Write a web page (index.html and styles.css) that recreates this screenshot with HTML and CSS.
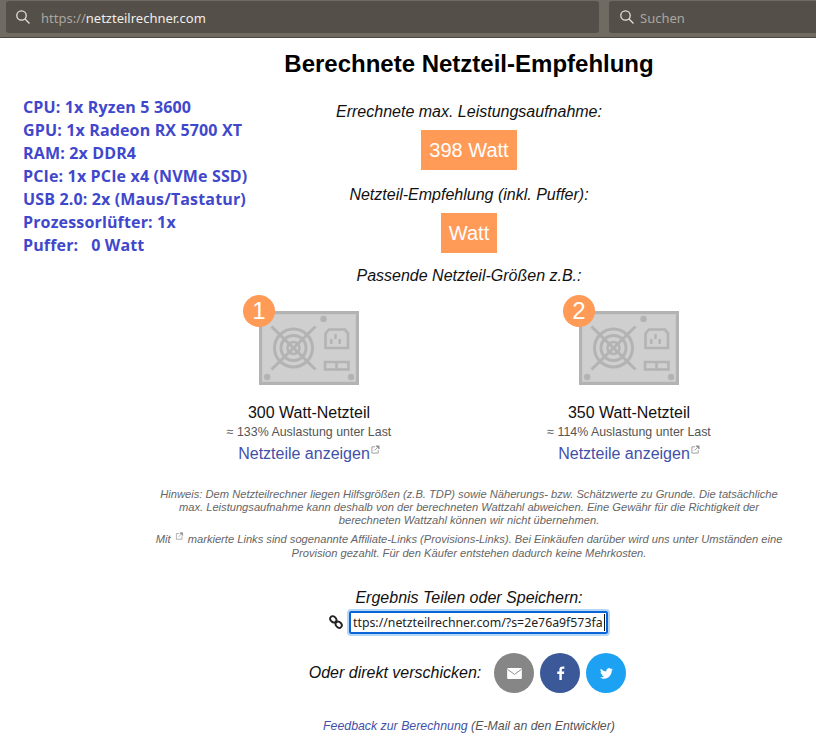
FILE: index.html
```html
<!DOCTYPE html>
<html lang="de">
<head>
<meta charset="utf-8">
<title>Netzteilrechner</title>
<link rel="stylesheet" href="styles.css">
</head>
<body>
<header class="toolbar">
  <div class="field url">
    <svg class="search" viewBox="0 0 16 16"><circle cx="6.5" cy="6.5" r="4.7"/><path d="M10 10l4.5 4.5"/></svg>
    <span class="proto">https://</span><span class="host">netzteilrechner.com</span>
  </div>
  <div class="field find">
    <svg class="search" viewBox="0 0 16 16"><circle cx="6.5" cy="6.5" r="4.7"/><path d="M10 10l4.5 4.5"/></svg>
    <span class="proto">Suchen</span>
  </div>
</header>
<div class="page">
  <aside class="specs">
    <div>CPU: 1x Ryzen 5 3600</div>
    <div>GPU: 1x Radeon RX 5700 XT</div>
    <div>RAM: 2x DDR4</div>
    <div>PCIe: 1x PCIe x4 (NVMe SSD)</div>
    <div>USB 2.0: 2x (Maus/Tastatur)</div>
    <div>Prozessorlüfter: 1x</div>
    <div>Puffer: &nbsp; 0 Watt</div>
  </aside>
  <main class="main">
    <h1 class="title">Berechnete Netzteil-Empfehlung</h1>
    <p class="label first">Errechnete max. Leistungsaufnahme:</p>
    <div class="badge">398 Watt</div>
    <p class="label second">Netzteil-Empfehlung (inkl. Puffer):</p>
    <div class="badge">Watt</div>
    <p class="label third">Passende Netzteil-Größen z.B.:</p>
    <div class="psus">
      <section class="psu">
        <div class="psu-pic">
          <svg class="psu-icon" viewBox="0 0 100 74"><use href="#psu"/></svg>
          <span class="num">1</span>
        </div>
        <div class="psu-name">300 Watt-Netzteil</div>
        <div class="psu-load">≈ 133% Auslastung unter Last</div>
        <a class="psu-link" href="#">Netzteile anzeigen<svg class="ext" viewBox="0 0 10 10"><use href="#ext"/></svg></a>
      </section>
      <section class="psu">
        <div class="psu-pic">
          <svg class="psu-icon" viewBox="0 0 100 74"><use href="#psu"/></svg>
          <span class="num">2</span>
        </div>
        <div class="psu-name">350 Watt-Netzteil</div>
        <div class="psu-load">≈ 114% Auslastung unter Last</div>
        <a class="psu-link" href="#">Netzteile anzeigen<svg class="ext" viewBox="0 0 10 10"><use href="#ext"/></svg></a>
      </section>
    </div>
    <p class="note note-a">Hinweis: Dem Netzteilrechner liegen Hilfsgrößen (z.B. TDP) sowie Näherungs- bzw. Schätzwerte zu Grunde. Die tatsächliche max. Leistungsaufnahme kann deshalb von der berechneten Wattzahl abweichen. Eine Gewähr für die Richtigkeit der berechneten Wattzahl können wir nicht übernehmen.</p>
    <p class="note note-b">Mit <svg class="ext ext-note" viewBox="0 0 10 10"><use href="#ext"/></svg> markierte Links sind sogenannte Affiliate-Links (Provisions-Links). Bei Einkäufen darüber wird uns unter Umständen eine Provision gezahlt. Für den Käufer entstehen dadurch keine Mehrkosten.</p>
    <p class="label share">Ergebnis Teilen oder Speichern:</p>
    <div class="share-row">
      <svg class="chain" viewBox="0 0 14 14"><ellipse cx="4.300" cy="4.300" rx="3.400" ry="2.700" transform="rotate(45 4.300 4.300)"/><ellipse cx="9.700" cy="9.700" rx="3.400" ry="2.700" transform="rotate(45 9.700 9.700)"/></svg>
      <div class="url-box"><span class="url-text">ttps://netzteilrechner.com/?s=2e76a9f573fa</span></div>
    </div>
    <div class="send-row">
      <span class="send-label">Oder direkt verschicken:</span>
      <a class="round mail" href="#"><svg viewBox="0 0 16 12"><rect width="16" height="12" rx="1.2" fill="#fff"/><path d="M0.5 1.5L8 7l7.5-5.5" fill="none" stroke="#868686" stroke-width="1"/></svg></a>
      <a class="round fb" href="#"><svg viewBox="0 0 10 16"><path d="M6.5 16V9h2.4l.4-2.8H6.5V4.5c0-.8.3-1.3 1.4-1.3h1.5V.7C9.100.6 8.300.5 7.300.5 5.200.5 3.700 1.800 3.700 4.200v2H1.300V9h2.400v7z" fill="#fff"/></svg></a>
      <a class="round tw" href="#"><svg viewBox="0 0 24 20"><path d="M24 2.400a9.800 9.800 0 0 1-2.800.8A4.900 4.900 0 0 0 23.300.500a9.800 9.800 0 0 1-3.100 1.200 4.900 4.900 0 0 0-8.400 4.500A14 14 0 0 1 1.700 1 4.900 4.900 0 0 0 3.200 7.600a4.900 4.900 0 0 1-2.200-.6 4.900 4.900 0 0 0 3.900 4.900 4.900 4.900 0 0 1-2.200.1 4.900 4.900 0 0 0 4.600 3.400A9.900 9.900 0 0 1 0 17.400 14 14 0 0 0 7.500 19.600c9.100 0 14.300-7.700 14-14.600A10 10 0 0 0 24 2.400z" fill="#fff"/></svg></a>
    </div>
    <p class="feedback"><a href="#">Feedback zur Berechnung</a> (E-Mail an den Entwickler)</p>
  </main>
</div>
<svg class="defs" width="0" height="0" aria-hidden="true">
  <symbol id="psu" viewBox="0 0 100 74">
    <rect x="1.600" y="1.600" width="96.800" height="70.800" fill="#cfcfcf" stroke="#b3b3b3" stroke-width="3.200"/>
    <g fill="none" stroke="#b3b3b3">
      <circle cx="34.500" cy="37" r="19" stroke-width="3"/>
      <circle cx="34.500" cy="37" r="12.500" stroke-width="3"/>
      <circle cx="34.500" cy="37" r="6" stroke-width="2.500"/>
      <path d="M12.500 15.500l44 43M56.500 15.500l-44 43" stroke-width="3"/>
      <path d="M70 18.500h16l3 4V37H66.500V22.500z" stroke-width="2.600"/>
      <path d="M66 51h23.500v7.500H66zM77.500 51v7.500" stroke-width="2.600"/>
    </g>
    <g fill="#b3b3b3">
      <rect x="71" y="28" width="2.400" height="5"/><rect x="79.500" y="28" width="2.400" height="5"/><rect x="75.300" y="23" width="2.400" height="5"/>
      <circle cx="64.500" cy="8" r="3.200"/><circle cx="8.200" cy="66" r="3.200"/><circle cx="92" cy="66" r="3.200"/>
    </g>
  </symbol>
  <symbol id="ext" viewBox="0 0 10 10">
    <path d="M4.500 2H1v7h7V5.500" fill="none" stroke="#999" stroke-width="1"/>
    <path d="M4 6l4-4M5.500 1H9v3.500z" fill="#999" stroke="#999" stroke-width="1"/>
  </symbol>
</svg>
</body>
</html>
```
FILE: styles.css
```css
* { box-sizing: border-box; }
html, body { margin: 0; padding: 0; }
body {
  width: 816px;
  height: 755px;
  overflow: hidden;
  background: #fff;
  color: #111;
  font-family: "Liberation Sans", Arial, sans-serif;
}
.toolbar {
  display: flex;
  gap: 10px;
  height: 38px;
  padding: 1px 0 4px 6px;
  background: #6f6b63;
  border-bottom: 1px solid #4b4740;
}
.field {
  display: flex;
  align-items: center;
  height: 32px;
  background: #544f48;
  border-radius: 3px;
  font-family: "Noto Sans", "Open Sans", sans-serif;
  font-size: 13px;
}
.url { width: 593px; padding-left: 9px; }
.find { flex: 1; padding-left: 10px; border-radius: 3px 0 0 3px; }
.search {
  width: 16px;
  height: 16px;
  margin-right: 10px;
  fill: none;
  stroke: #e4e2de;
  stroke-width: 1.300;
}
.find .search { margin-right: 5px; }
.proto { color: #aaa7a1; padding-top: 2px; }
.host { color: #f0eeea; padding-top: 2px; }
.page { position: relative; height: 717px; }
.specs {
  position: absolute;
  left: 23px;
  top: 58px;
  color: #3f48cc;
  font-family: "Open Sans", sans-serif;
  font-size: 16px;
  font-weight: 700;
  line-height: 23px;
  letter-spacing: 0.15px;
}
.main {
  width: 640px;
  margin-left: 149px;
  display: flex;
  flex-direction: column;
  align-items: center;
  text-align: center;
}
.title {
  margin: 12px 0 0;
  font-size: 24px;
  line-height: 28px;
  font-weight: 700;
  color: #000;
}
.label {
  margin: 0;
  font-size: 16px;
  line-height: 20px;
  font-style: italic;
}
.first { margin-top: 24px; }
.second { margin-top: 15px; }
.third { margin-top: 13px; }
.badge {
  margin-top: 8px;
  padding: 0 8px;
  height: 40px;
  line-height: 40px;
  background: #ff9a57;
  color: #fff;
  font-size: 20px;
}
.psus { display: flex; width: 640px; margin-top: 16px; }
.psu { width: 320px; display: flex; flex-direction: column; align-items: center; }
.psu-pic { position: relative; width: 100px; height: 74px; margin-top: 9px; }
.psu-icon { display: block; width: 100px; height: 74px; }
.num {
  position: absolute;
  left: -16px;
  top: -16px;
  width: 32px;
  height: 32px;
  border-radius: 50%;
  background: #ff9a57;
  color: #fff;
  font-size: 24px;
  line-height: 32px;
  text-align: center;
}
.psu-name { margin-top: 18px; font-size: 16px; line-height: 20px; }
.psu-load { font-size: 12.400px; line-height: 14px; margin-top: 2px; color: #555; }
.psu-link { margin-top: 5px; font-size: 16px; line-height: 20px; color: #3f51a8; text-decoration: none; }
.ext { display: inline-block; width: 9px; height: 9px; vertical-align: 5px; margin-left: 1px; }
.note {
  margin: 0;
  width: 640px;
  font-size: 11.150px;
  line-height: 13px;
  font-style: italic;
  color: #666;
}
.note-a { margin-top: 24px; }
.note-b { margin-top: 5px; line-height: 14px; }
.ext-note { margin: 0 1px; vertical-align: 3px; height: 8px; }
.share { margin-top: 28px; }
.share-row { display: flex; align-items: center; margin-top: 3px; margin-left: -1px; gap: 6px; }
.chain { width: 14px; height: 14px; margin-top: -2px; fill: none; stroke: #222; stroke-width: 1.900; }
.url-box {
  width: 259px;
  height: 23px;
  padding: 0 2px 0 2px;
  border: 2px solid #0a66d8;
  border-radius: 2px;
  box-shadow: 0 0 0 2px #b6d7f5;
  font-family: "Noto Sans", sans-serif;
  font-size: 12.300px;
  line-height: 19px;
  color: #222;
  white-space: nowrap;
  overflow: hidden;
  text-align: left;
}
.url-text { border-right: 1px solid #111; padding-right: 1px; }
.send-row { display: flex; align-items: center; margin-top: 19px; margin-left: -3px; gap: 6px; }
.send-label { font-size: 16px; font-style: italic; margin-right: 7px; }
.round { display: flex; align-items: center; justify-content: center; width: 40px; height: 40px; border-radius: 50%; }
.mail { background: #868686; }
.mail svg { width: 15px; height: 11px; }
.fb { background: #3b5998; }
.fb svg { width: 9px; height: 14px; }
.tw { background: #1da1f2; }
.tw svg { width: 13px; height: 11px; }
.feedback { margin: 26px 0 0; font-size: 12.340px; font-style: italic; color: #555; line-height: 14px; }
.feedback a { color: #3f51a8; text-decoration: none; }
.defs { position: absolute; }
```
